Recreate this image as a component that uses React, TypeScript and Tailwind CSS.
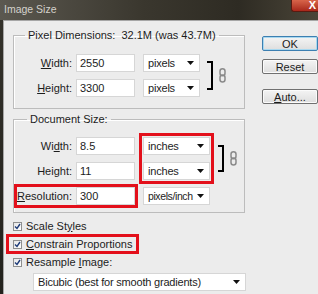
const font = "font-['Liberation_Sans',Arial,sans-serif]";

function Chain() {
  return (
    <svg width="7" height="15" viewBox="0 0 7 15" className="shrink-0">
      <rect x="1" y="0.8" width="5" height="7" rx="2.5" fill="none" stroke="#8a8a8a" strokeWidth="1.5" />
      <rect x="1" y="7" width="5" height="7" rx="2.5" fill="none" stroke="#8a8a8a" strokeWidth="1.5" />
    </svg>
  );
}

function Arrow() {
  return (
    <svg width="7" height="4" viewBox="0 0 7 4" className="shrink-0">
      <path d="M0 0 H7 L3.5 4 Z" fill="#111" />
    </svg>
  );
}

function Input({ value }: { value: string }) {
  return (
    <div className="w-[59px] h-[18px] bg-white border border-[#d6d6d6] pl-[3px] flex items-center text-[11px]">
      {value}
    </div>
  );
}

function Select({ value, w, tight }: { value: string; w: string; tight?: boolean }) {
  return (
    <div className={`${w} h-[18px] bg-white border border-[#d6d6d6] pl-[4px] pr-[5px] flex items-center justify-between`}>
      <span className={`whitespace-nowrap ${tight ? "text-[10.5px] tracking-[-0.4px]" : "tracking-[-0.2px]"}`}>{value}</span>
      <Arrow />
    </div>
  );
}

function Bracket({ h }: { h: string }) {
  return <div className={`w-[6px] ${h} border-t-2 border-r-2 border-b-2 border-black`} />;
}

function Check() {
  return (
    <div className="w-[9px] h-[9px] border border-[#8e8f8f] bg-gradient-to-br from-[#e6e6e6] to-white flex items-center justify-center shrink-0">
      <svg width="7" height="7" viewBox="0 0 7 7">
        <path d="M1 3.5 L3 5.5 L6 1" fill="none" stroke="#1d3b78" strokeWidth="1.4" />
      </svg>
    </div>
  );
}

function Button({ label, primary }: { label: React.ReactNode; primary?: boolean }) {
  return (
    <div
      className={`w-[56px] h-[15px] rounded-[2px] border flex items-center justify-center bg-gradient-to-b from-[#f4f4f4] to-[#dedede] ${
        primary ? "border-[#3c7fb1] shadow-[inset_0_0_0_1px_#a8d8f0]" : "border-[#707070] shadow-[inset_0_0_0_1px_#fbfbfb]"
      }`}
    >
      {label}
    </div>
  );
}

export default function App() {
  return (
    <div className={`w-[318px] h-[294px] overflow-hidden bg-[#ececec] text-[11px] leading-[14px] text-[#1c1c1c] ${font}`}>
      {/* Title bar */}
      <div className="h-[20px] flex justify-between bg-[linear-gradient(to_right,#5b5850,#3a372e_45%,#2e2b23_75%,#4a4538)]">
        <div className="pl-[4px] pt-[2px] text-[10.5px] text-[#d4d2cc]">Image Size</div>
        <div className="w-[27px] h-[12px] shrink-0 rounded-bl-[3px] border border-t-0 border-r-0 border-[#5a1a10] bg-gradient-to-b from-[#d8644a] to-[#a8261a] flex items-center justify-end pr-[2px] text-white font-bold text-[11px] leading-[11px]">
          X
        </div>
      </div>

      <div className="flex h-[274px]">
        <div className="w-[3px] bg-gradient-to-b from-[#33312a] to-[#23221d]" />
        <div className="flex-1 flex border-l border-t border-[#a6a6a6]">
          {/* Left column */}
          <div className="w-[241px] pl-[9px] pt-[7px] flex flex-col">
            <fieldset className="w-[232px] border border-[#bcbcbc] shadow-[inset_1px_1px_0_#fff] pt-[12px] pb-[11px]">
              <legend className="ml-[11px] px-[3px]">
                Pixel Dimensions:<span className="ml-[6px]">32.1M (was 43.7M)</span>
              </legend>
              <div className="flex items-center pl-[3px]">
                <div className="flex flex-col gap-[7px]">
                  <div className="flex items-center">
                    <div className="w-[55px] text-right"><span className="underline">W</span>idth:</div>
                    <div className="ml-[4px]"><Input value="2550" /></div>
                    <div className="ml-[8px]"><Select value="pixels" w="w-[57px]" /></div>
                  </div>
                  <div className="flex items-center">
                    <div className="w-[55px] text-right"><span className="underline">H</span>eight:</div>
                    <div className="ml-[4px]"><Input value="3300" /></div>
                    <div className="ml-[8px]"><Select value="pixels" w="w-[57px]" /></div>
                  </div>
                </div>
                <div className="ml-[7px]"><Bracket h="h-[29px]" /></div>
                <div className="ml-[6px]"><Chain /></div>
              </div>
            </fieldset>

            <fieldset className="mt-[3px] w-[232px] border border-[#bcbcbc] shadow-[inset_1px_1px_0_#fff] pt-[11px] pb-[7px]">
              <legend className="ml-[13px] px-[3px]">Document Size:</legend>
              <div className="flex pl-[3px]">
                <div className="flex flex-col gap-[7px]">
                  <div className="flex items-center h-[18px] w-[55px] justify-end">Wi<span className="underline">d</span>th:</div>
                  <div className="flex items-center h-[18px] w-[55px] justify-end">Hei<span className="underline">g</span>ht:</div>
                </div>
                <div className="ml-[4px] flex flex-col gap-[7px]">
                  <Input value="8.5" />
                  <Input value="11" />
                </div>
                <div className="ml-[8px] flex flex-col gap-[7px] outline-[3px] outline-solid outline-[#e3101b] outline-offset-[1px]">
                  <Select value="inches" w="w-[67px]" />
                  <Select value="inches" w="w-[67px]" />
                </div>
                <div className="ml-[8px] self-center"><Bracket h="h-[27px]" /></div>
                <div className="ml-[6px] self-center"><Chain /></div>
              </div>
              <div className="flex items-center pl-[3px] mt-[7px]">
                <div className="flex items-center outline-[3px] outline-solid outline-[#e3101b]">
                  <div className="w-[55px] text-right"><span className="underline">R</span>esolution:</div>
                  <div className="ml-[4px]"><Input value="300" /></div>
                </div>
                <div className="ml-[8px]"><Select value="pixels/inch" w="w-[67px]" tight /></div>
              </div>
            </fieldset>

            <div className="mt-[4px] flex flex-col">
              <div className="h-[18px] flex items-center gap-[4px]">
                <Check />
                <span>Scale St<span className="underline">y</span>les</span>
              </div>
              <div className="h-[18px] flex items-center">
                <div className="h-[14px] -mx-[4px] px-[4px] flex items-center gap-[4px] outline-[3px] outline-solid outline-[#e3101b]">
                  <Check />
                  <span><span className="underline">C</span>onstrain Proportions</span>
                </div>
              </div>
              <div className="h-[18px] flex items-center gap-[4px]">
                <Check />
                <span>Resample <span className="underline">I</span>mage:</span>
              </div>
              <div className="mt-[2px] ml-[20px]">
                <Select value="Bicubic (best for smooth gradients)" w="w-[213px]" />
              </div>
            </div>
          </div>

          {/* Right column */}
          <div className="pl-[17px] pt-[15px] flex flex-col">
            <Button label="OK" primary />
            <div className="mt-[8px]"><Button label="Reset" /></div>
            <div className="mt-[15px]"><Button label={<span><span className="underline">A</span>uto...</span>} /></div>
          </div>
        </div>
      </div>
    </div>
  );
}
